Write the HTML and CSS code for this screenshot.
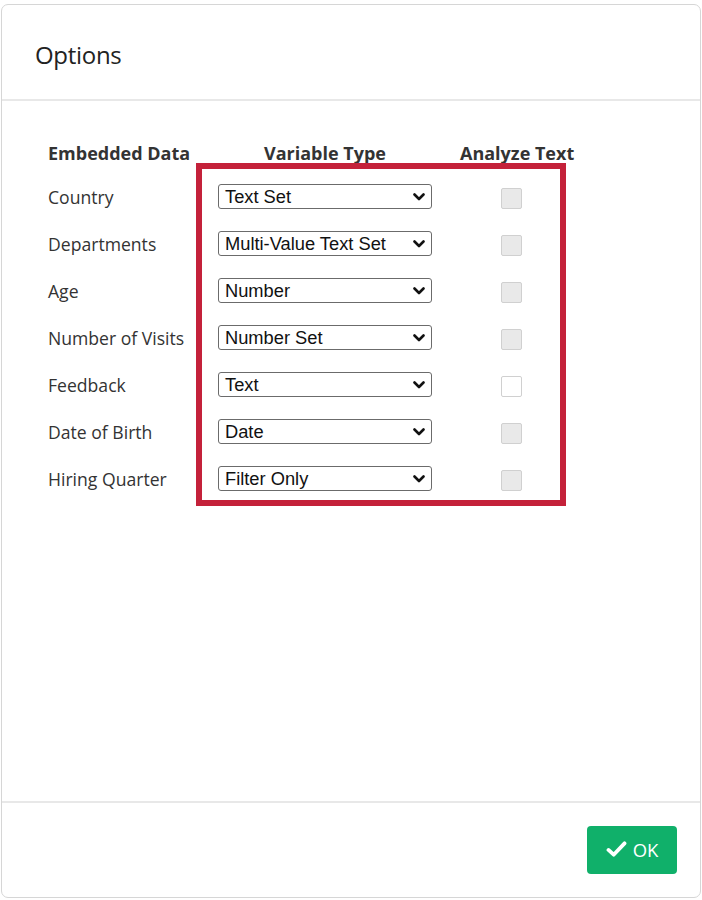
FILE: index.html
```html
<!DOCTYPE html>
<html>
<head>
<meta charset="utf-8">
<link rel="stylesheet" href="styles.css">
</head>
<body>
<div class="dialog">
  <div class="header"><h1 class="title">Options</h1></div>
  <div class="body">
    <div class="table">
      <div class="th th-label">Embedded Data</div>
      <div class="th th-type">Variable Type</div>
      <div class="th th-analyze">Analyze Text</div>

      <div class="label">Country</div>
      <div class="sel"><span>Text Set</span><svg class="chev" viewBox="0 0 12 8"><path d="M1.5 1.5 L6 6 L10.5 1.5" /></svg></div>
      <div class="cbcell"><span class="cb"></span></div>

      <div class="label">Departments</div>
      <div class="sel"><span>Multi-Value Text Set</span><svg class="chev" viewBox="0 0 12 8"><path d="M1.5 1.5 L6 6 L10.5 1.5" /></svg></div>
      <div class="cbcell"><span class="cb"></span></div>

      <div class="label">Age</div>
      <div class="sel"><span>Number</span><svg class="chev" viewBox="0 0 12 8"><path d="M1.5 1.5 L6 6 L10.5 1.5" /></svg></div>
      <div class="cbcell"><span class="cb"></span></div>

      <div class="label">Number of Visits</div>
      <div class="sel"><span>Number Set</span><svg class="chev" viewBox="0 0 12 8"><path d="M1.5 1.5 L6 6 L10.5 1.5" /></svg></div>
      <div class="cbcell"><span class="cb"></span></div>

      <div class="label">Feedback</div>
      <div class="sel"><span>Text</span><svg class="chev" viewBox="0 0 12 8"><path d="M1.5 1.5 L6 6 L10.5 1.5" /></svg></div>
      <div class="cbcell"><span class="cb cb-on"></span></div>

      <div class="label">Date of Birth</div>
      <div class="sel"><span>Date</span><svg class="chev" viewBox="0 0 12 8"><path d="M1.5 1.5 L6 6 L10.5 1.5" /></svg></div>
      <div class="cbcell"><span class="cb"></span></div>

      <div class="label">Hiring Quarter</div>
      <div class="sel"><span>Filter Only</span><svg class="chev" viewBox="0 0 12 8"><path d="M1.5 1.5 L6 6 L10.5 1.5" /></svg></div>
      <div class="cbcell"><span class="cb"></span></div>
    </div>
    <div class="highlight"></div>
  </div>
  <div class="footer">
    <button class="ok"><svg class="check" viewBox="0 0 22 18"><path d="M2.5 9.5 L8 14.5 L19.5 2.5" /></svg><span>OK</span></button>
  </div>
</div>
</body>
</html>
```

FILE: styles.css
```css
* { box-sizing: border-box; }
html, body { margin: 0; padding: 0; background: #ffffff; }
body { font-family: "Open Sans", "Liberation Sans", sans-serif; color: #333; }

.dialog {
  margin: 4px 1px 3px 1px;
  width: 700px;
  height: 894px;
  border: 1px solid #d6d6d6;
  border-radius: 7px;
  display: flex;
  flex-direction: column;
  background: #fff;
}

.header {
  height: 96px;
  border-bottom: 2px solid #e8e8e8;
  display: flex;
  align-items: center;
  padding-left: 33px;
  flex: none;
}
.title {
  margin: 0;
  font-size: 24px;
  font-weight: 400;
  color: #222;
  letter-spacing: -0.3px;
  padding-top: 4px;
}

.body {
  flex: 1;
  position: relative;
  padding: 34px 0 0 46px;
}

.table {
  display: grid;
  grid-template-columns: 170px 214px 168px;
  grid-template-rows: 38px repeat(7, 47px);
  align-items: center;
}
.th {
  font-weight: 700;
  font-size: 18px;
  color: #333;
  align-self: start;
  line-height: 24px;
  margin-top: 6px;
}
.th-type { text-align: center; }
.th-analyze { padding-left: 28px; }

.label {
  font-size: 17.6px;
  color: #333;
}

.sel {
  height: 25px;
  border: 1px solid #6b6b6b;
  border-radius: 3px;
  display: flex;
  align-items: center;
  justify-content: space-between;
  padding: 0 6px 0 6px;
  font-family: "Liberation Sans", Arial, sans-serif;
  font-size: 18.3px;
  color: #111;
  background: #fff;
}
.sel span { padding-top: 1px; }
.chev { width: 12px; height: 8px; fill: none; stroke: #111; stroke-width: 2.6; stroke-linecap: round; stroke-linejoin: round; }

.cbcell { padding-left: 69px; display: flex; align-items: center; }
.cb {
  width: 21px;
  height: 21px;
  border: 1px solid #d0d0d0;
  border-radius: 2px;
  background: #e9e9e9;
  display: block;
  margin-top: 3px;
}
.cb-on { background: #fff; }

.highlight {
  position: absolute;
  left: 194px;
  top: 62px;
  width: 370px;
  height: 343px;
  border: 6px solid #c4213a;
}

.footer {
  height: 96px;
  border-top: 2px solid #e8e8e8;
  display: flex;
  align-items: center;
  justify-content: flex-end;
  padding-right: 23px;
  flex: none;
}
.ok {
  width: 90px;
  height: 48px;
  background: #10b06a;
  border: none;
  border-radius: 4px;
  color: #fff;
  font-family: "Open Sans", "Liberation Sans", sans-serif;
  font-size: 18.5px;
  display: flex;
  align-items: center;
  justify-content: center;
  gap: 6px;
  padding: 0;
  margin-top: -1px;
}
.check { width: 21px; height: 17px; fill: none; stroke: #fff; stroke-width: 4; stroke-linecap: round; stroke-linejoin: round; }
```
